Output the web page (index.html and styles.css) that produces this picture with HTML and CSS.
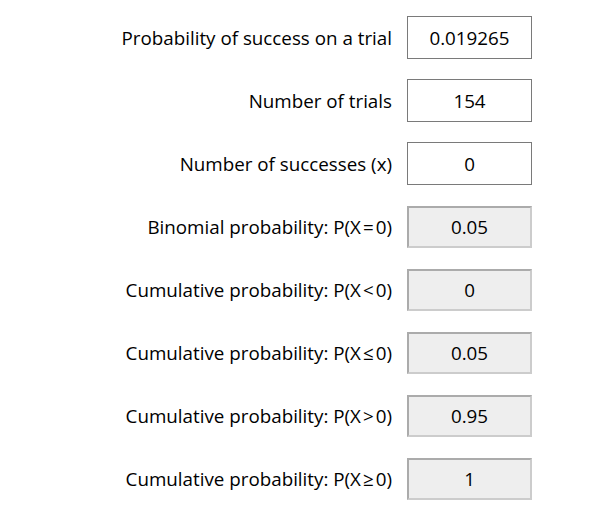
FILE: index.html
```html
<!DOCTYPE html>
<html>
<head>
<meta charset="utf-8">
<link rel="stylesheet" href="styles.css">
</head>
<body>
<div class="form">
  <label class="lbl">Probability of success on a trial</label>
  <div class="box input">0.019265</div>
  <label class="lbl">Number of trials</label>
  <div class="box input">154</div>
  <label class="lbl">Number of successes (x)</label>
  <div class="box input">0</div>
  <label class="lbl">Binomial probability: P(X<span class="op">=</span>0)</label>
  <div class="box out">0.05</div>
  <label class="lbl">Cumulative probability: P(X<span class="op">&lt;</span>0)</label>
  <div class="box out">0</div>
  <label class="lbl">Cumulative probability: P(X<span class="op">≤</span>0)</label>
  <div class="box out">0.05</div>
  <label class="lbl">Cumulative probability: P(X<span class="op">&gt;</span>0)</label>
  <div class="box out">0.95</div>
  <label class="lbl">Cumulative probability: P(X<span class="op">≥</span>0)</label>
  <div class="box out">1</div>
</div>
</body>
</html>
```
FILE: styles.css
```css
html, body {
  margin: 0;
  padding: 0;
  background: #ffffff;
}
body {
  font-family: "Open Sans", "Noto Sans", sans-serif;
  font-size: 18.8px;
  color: #000;
}
.form {
  display: grid;
  grid-template-columns: 1fr 125px;
  grid-auto-rows: 43px;
  column-gap: 15px;
  row-gap: 20px;
  padding: 16px 67px 0 0;
  align-items: center;
}
.lbl {
  text-align: right;
  white-space: nowrap;
  padding-top: 1px;
}
.op {
  margin: 0 2px;
}
.box {
  box-sizing: border-box;
  height: 43px;
  display: flex;
  align-items: center;
  justify-content: center;
  padding-top: 1px;
}
.input {
  border: 1px solid #7a7a7a;
  background: #fff;
}
.out {
  border: 2px solid;
  border-color: #ababab #cccccc #cccccc #ababab;
  background: #eeeeee;
  height: 42px;
}
```
